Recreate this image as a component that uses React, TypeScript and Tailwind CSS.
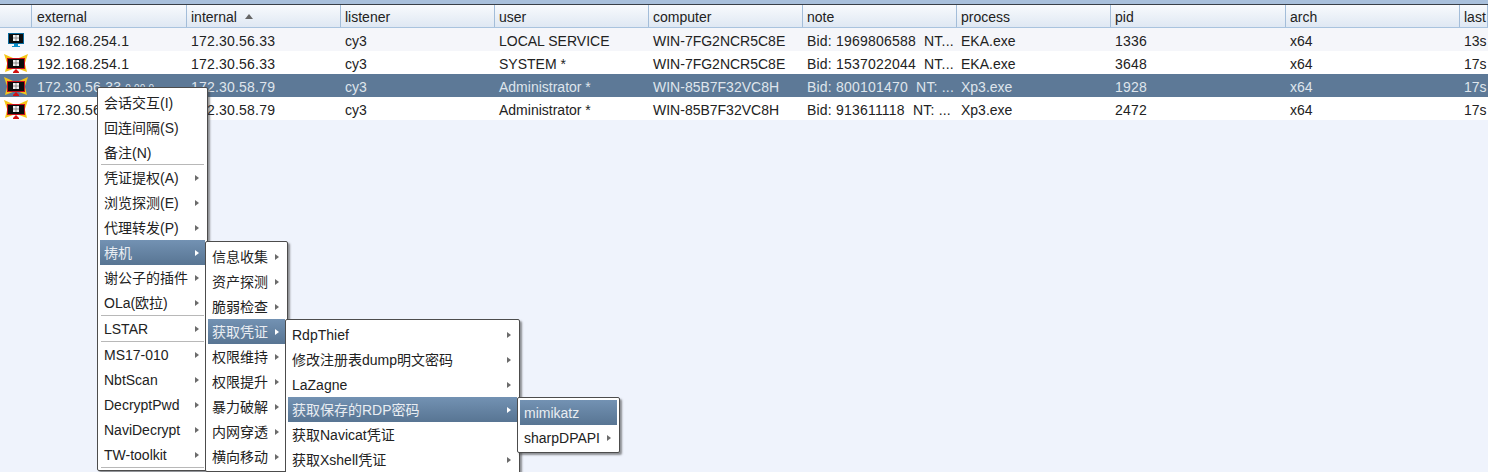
import React from "react";
import clsx from "clsx";

const columns = [
  { name: "external", width: "w-[155px]" },
  { name: "internal", width: "w-[154px]" },
  { name: "listener", width: "w-[154px]" },
  { name: "user", width: "w-[154px]" },
  { name: "computer", width: "w-[154px]" },
  { name: "note", width: "w-[154px]" },
  { name: "process", width: "w-[154px]" },
  { name: "pid", width: "w-[175px]" },
  { name: "arch", width: "w-[174px]" },
  { name: "last", width: "w-[28px]" },
];

const rows = [
  { admin: false, cells: ["192.168.254.1", "172.30.56.33", "cy3", "LOCAL SERVICE", "WIN-7FG2NCR5C8E", "Bid: 1969806588  NT...", "EKA.exe", "1336", "x64", "13s"] },
  { admin: true, cells: ["192.168.254.1", "172.30.56.33", "cy3", "SYSTEM *", "WIN-7FG2NCR5C8E", "Bid: 1537022044  NT...", "EKA.exe", "3648", "x64", "17s"] },
  { admin: true, selected: true, cells: ["172.30.56.33", "172.30.58.79", "cy3", "Administrator *", "WIN-85B7F32VC8H", "Bid: 800101470  NT: ...", "Xp3.exe", "1928", "x64", "17s"] },
  { admin: true, cells: ["172.30.56.33", "172.30.58.79", "cy3", "Administrator *", "WIN-85B7F32VC8H", "Bid: 913611118  NT: ...", "Xp3.exe", "2472", "x64", "17s"] },
];

type Item = { label?: string; arrow?: boolean; active?: boolean; sep?: boolean; short?: boolean };

const mainMenu: Item[] = [
  { label: "会话交互(I)" },
  { label: "回连间隔(S)" },
  { label: "备注(N)", short: true },
  { sep: true },
  { label: "凭证提权(A)", arrow: true },
  { label: "浏览探测(E)", arrow: true },
  { label: "代理转发(P)", arrow: true },
  { label: "梼机", arrow: true, active: true },
  { label: "谢公子的插件", arrow: true },
  { label: "OLa(欧拉)", arrow: true },
  { sep: true },
  { label: "LSTAR", arrow: true },
  { sep: true },
  { label: "MS17-010", arrow: true },
  { label: "NbtScan", arrow: true },
  { label: "DecryptPwd", arrow: true },
  { label: "NaviDecrypt", arrow: true },
  { label: "TW-toolkit", arrow: true },
  { sep: true },
];

const subMenu: Item[] = [
  { label: "信息收集", arrow: true },
  { label: "资产探测", arrow: true },
  { label: "脆弱检查", arrow: true },
  { label: "获取凭证", arrow: true, active: true },
  { label: "权限维持", arrow: true },
  { label: "权限提升", arrow: true },
  { label: "暴力破解", arrow: true },
  { label: "内网穿透", arrow: true },
  { label: "横向移动", arrow: true },
];

const credMenu: Item[] = [
  { label: "RdpThief", arrow: true },
  { label: "修改注册表dump明文密码", arrow: true },
  { label: "LaZagne", arrow: true },
  { label: "获取保存的RDP密码", arrow: true, active: true },
  { label: "获取Navicat凭证" },
  { label: "获取Xshell凭证", arrow: true },
];

const rdpMenu: Item[] = [
  { label: "mimikatz", active: true },
  { label: "sharpDPAPI", arrow: true },
];

function HostIcon({ admin }: { admin: boolean }) {
  if (!admin) {
    return (
      <svg width="24" height="20" viewBox="0 0 24 20" className="block">
        <rect x="4" y="2" width="16" height="11" fill="#0a6a9c" />
        <rect x="5" y="3" width="14" height="9" fill="#0c0c0c" />
        <rect x="9" y="4" width="6" height="6" fill="#f1f1f1" />
        <path d="M9 7h6M12 4v6" stroke="#777" strokeWidth="0.8" />
        <path d="M10 13h4v2h2v1H8v-1h2Z" fill="#0a8fc9" />
      </svg>
    );
  }
  return (
    <svg width="24" height="20" viewBox="0 0 24 20" className="block">
      <g fill="#f5c518">
        <path d="M0 0 L9 4 L3 9 Z" />
        <path d="M24 0 L15 4 L21 9 Z" />
        <path d="M1 18 L9 15 L3 10 Z" />
        <path d="M23 18 L15 15 L21 10 Z" />
      </g>
      <rect x="3" y="4" width="18" height="11" fill="#c9101a" />
      <rect x="4" y="5" width="16" height="9" fill="#0c0c0c" />
      <rect x="9" y="6" width="6" height="6" fill="#f1f1f1" />
      <path d="M9 9h6M12 6v6" stroke="#777" strokeWidth="0.8" />
      <path d="M9 18 L12 15 L15 18 V19 H9 Z" fill="#d40f0f" />
    </svg>
  );
}

function Arrow({ light }: { light?: boolean }) {
  return (
    <span
      className={clsx(
        "ml-auto h-0 w-0 border-y-[3.5px] border-l-[4px] border-y-transparent",
        light ? "border-l-white" : "border-l-[#6b6b6b]"
      )}
    />
  );
}

function Menu({ items, className }: { items: Item[]; className: string }) {
  return (
    <div
      className={clsx(
        "absolute rounded-[2px] border border-[#4c4c4c] bg-white p-[2px] shadow-[2px_2px_2px_rgba(60,60,60,0.55)]",
        className
      )}
    >
      {items.map((item, i) =>
        item.sep ? (
          <div key={i} className="mx-[1px] h-px bg-[#b8b8b8]" />
        ) : (
          <div
            key={i}
            className={clsx(
              "flex items-center whitespace-nowrap pl-[4px] pr-[6px]",
              item.short ? "h-[24px]" : "h-[25px]",
              item.active
                ? "bg-gradient-to-b from-[#7392b3] to-[#587593] text-[#e9edf2]"
                : "text-[#222]"
            )}
          >
            <span className="pt-[2px]">{item.label}</span>
            {item.arrow && <Arrow light={item.active} />}
          </div>
        )
      )}
    </div>
  );
}

export default function App() {
  return (
    <div className="relative h-[472px] w-[1488px] overflow-hidden bg-[#eff3fc] font-['Liberation_Sans','Noto_Sans_CJK_SC',sans-serif] text-[14px] text-[#222]">
      <div className="h-[4px] bg-[#a9c0dc]" />
      <div className="h-px bg-[#3a3f47]" />

      <div className="flex h-[23px] border-b border-[#a9c3de] bg-gradient-to-b from-[#f8fafd] to-[#dfe8f3]">
        <div className="w-[32px] shrink-0 border-r border-[#a3bdd9]" />
        {columns.map((col, c) => (
          <div
            key={col.name}
            className={clsx(
              "flex shrink-0 items-center border-r border-[#a3bdd9] pt-[2px]",
              c === 0 ? "pl-[5px]" : "pl-[4px]",
              col.width
            )}
          >
            {col.name}
            {col.name === "internal" && (
              <span className="ml-[8px] mb-[2px] h-0 w-0 border-x-[4px] border-b-[5px] border-x-transparent border-b-[#666]" />
            )}
          </div>
        ))}
      </div>

      {rows.map((row, i) => (
        <div
          key={i}
          className={clsx(
            "flex h-[23px] items-center pt-[3px]",
            row.selected ? "bg-[#5d7997] text-[#dfe5ec]" : i % 2 === 0 ? "bg-[#f5f6fa]" : "bg-white"
          )}
        >
          <div className="flex w-[32px] shrink-0 justify-center pr-[1px]">
            <HostIcon admin={row.admin} />
          </div>
          {row.cells.map((cell, c) => (
            <div
              key={c}
              className={clsx(
                "shrink-0 whitespace-pre",
                c === 0 ? "pl-[5px]" : "pl-[4px]",
                (c < 2 || c === 5 || c === 7) && "tracking-[0.2px]",
                columns[c].width
              )}
            >
              {cell}
              {c === 0 && row.selected && <span className="ml-[4px] text-[10px]">0.00.0</span>}
            </div>
          ))}
        </div>
      ))}

      <Menu items={mainMenu} className="left-[97px] top-[87px] w-[111px]" />
      <Menu items={subMenu} className="left-[205px] top-[241px] w-[83px]" />
      <Menu items={credMenu} className="left-[285px] top-[319px] w-[235px]" />
      <Menu items={rdpMenu} className="left-[517px] top-[397px] w-[103px]" />
    </div>
  );
}
